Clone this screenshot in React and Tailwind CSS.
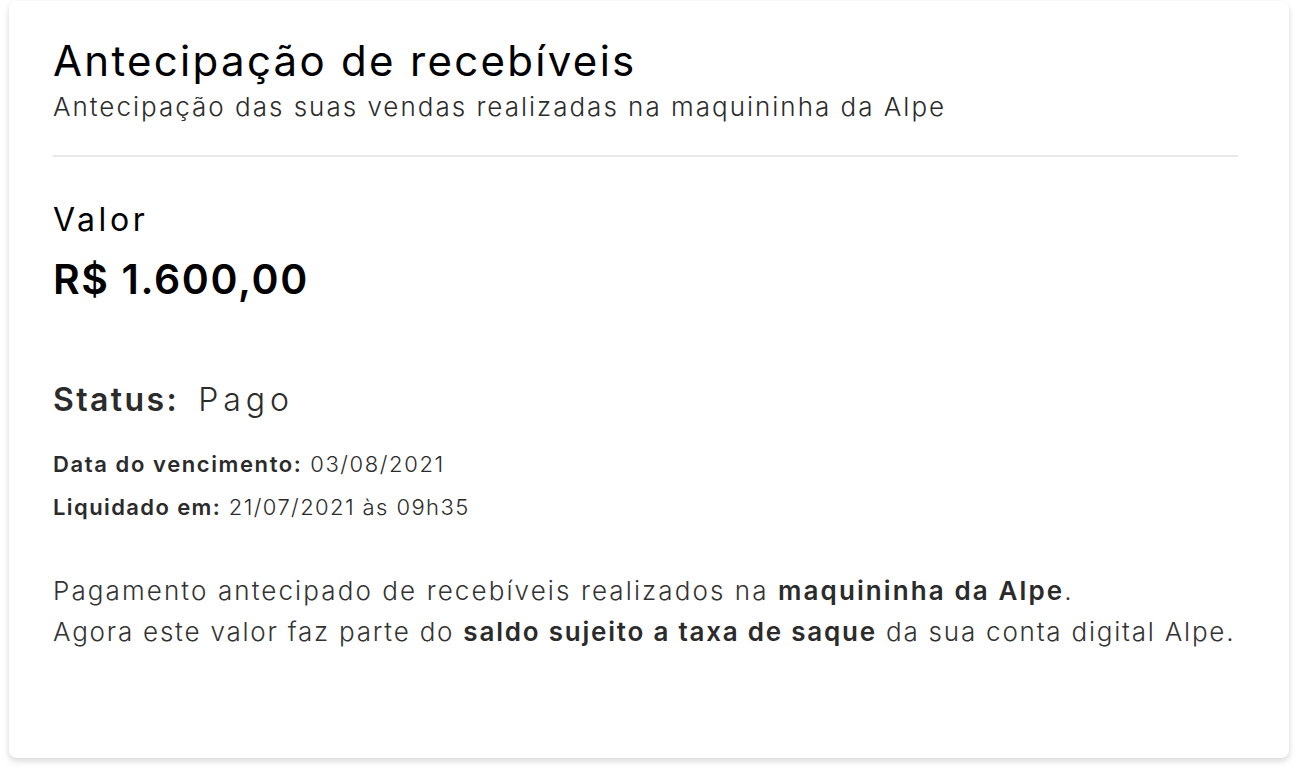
import React from 'react';

const font = { fontFamily: 'Inter, "DejaVu Sans", sans-serif' };

const App = () => {
  return (
    <div className="min-h-screen bg-white px-[9px] pt-[1px]" style={font}>
      <div className="h-[757px] rounded-lg bg-white pl-[44px] pr-[51px] pt-[39px] shadow-[0_3px_6px_rgba(0,0,0,0.16)]">
        <h1 className="text-[42px] leading-[42px] font-normal text-black tracking-[2.3px]">
          Antecipação de recebíveis
        </h1>
        <p className="mt-[10px] text-[26px] leading-[30px] font-light text-[#2b2b2b] tracking-[2px]">
          Antecipação das suas vendas realizadas na maquininha da Alpe
        </p>
        <div className="mt-[33px] h-[2px] bg-[#e8e8e8]" />

        <div className="mt-[47px] text-[32px] leading-[32px] font-normal text-black tracking-[3.6px]">Valor</div>
        <div className="mt-[23px] text-[41px] leading-[41px] font-semibold text-black tracking-[1.6px]">R$ 1.600,00</div>

        <div className="mt-[84px] flex items-baseline text-[32px] leading-[32px] text-[#2b2b2b]">
          <span className="font-semibold tracking-[2.4px]">Status:</span>
          <span className="ml-[19px] font-light tracking-[5px]">Pago</span>
        </div>

        <div className="mt-[37px] text-[22px] leading-[22px] text-[#2b2b2b] tracking-[1.6px]">
          <span className="font-semibold">Data do vencimento:</span>{' '}
          <span className="font-light">03/08/2021</span>
        </div>
        <div className="mt-[21px] text-[22px] leading-[22px] text-[#2b2b2b] tracking-[1.4px]">
          <span className="font-semibold">Liquidado em:</span>{' '}
          <span className="font-light">21/07/2021 às 09h35</span>
        </div>

        <div className="mt-[52px] text-[26px] leading-[41px] font-light text-[#333333] whitespace-nowrap">
          <p className="tracking-[2.1px]">
            Pagamento antecipado de recebíveis realizados na{' '}
            <span className="font-semibold text-[#2b2b2b]">maquininha da Alpe</span>.
          </p>
          <p className="tracking-[1.78px]">
            Agora este valor faz parte do{' '}
            <span className="font-semibold text-[#2b2b2b]">saldo sujeito a taxa de saque</span> da sua conta digital Alpe.
          </p>
        </div>
      </div>
    </div>
  );
};

export default App;
